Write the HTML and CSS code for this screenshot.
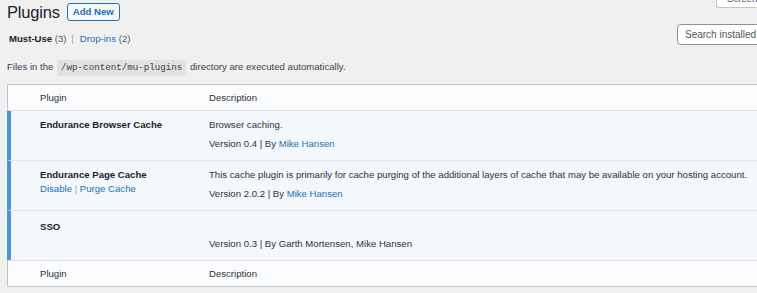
FILE: index.html
```html
<!DOCTYPE html>
<html lang="en">
<head>
    <meta charset="UTF-8">
    <meta name="viewport" content="width=device-width, initial-scale=1.0">
    <title>Plugins</title>
    <link rel="stylesheet" href="styles.css">
</head>
<body>
    <div class="wrap">
        <button class="screen-options">Screen Options &#9662;</button>

        <div class="page-title">
            <h1>Plugins</h1>
            <a class="add-new" href="#">Add New</a>
        </div>

        <div class="tablenav">
            <ul class="subsubsub">
                <li><a class="current" href="#">Must-Use <span class="count">(3)</span></a> <span class="sep">|</span></li>
                <li><a href="#">Drop-ins</a> <span class="count">(2)</span></li>
            </ul>
            <input class="search" type="search" placeholder="Search installed plugins...">
        </div>

        <p class="notice">Files in the <code>/wp-content/mu-plugins</code> directory are executed automatically.</p>

        <table class="plugins">
            <thead>
                <tr>
                    <th class="column-name">Plugin</th>
                    <th class="column-desc">Description</th>
                </tr>
            </thead>
            <tbody>
                <tr class="active">
                    <td class="plugin-title"><strong>Endurance Browser Cache</strong></td>
                    <td class="plugin-desc">
                        <p>Browser caching.</p>
                        <div class="meta">Version 0.4 | By <a href="#">Mike Hansen</a></div>
                    </td>
                </tr>
                <tr class="active">
                    <td class="plugin-title">
                        <strong>Endurance Page Cache</strong>
                        <div class="row-actions"><a href="#">Disable</a> <span class="sep">|</span> <a href="#">Purge Cache</a></div>
                    </td>
                    <td class="plugin-desc">
                        <p>This cache plugin is primarily for cache purging of the additional layers of cache that may be available on your hosting account.</p>
                        <div class="meta">Version 2.0.2 | By <a href="#">Mike Hansen</a></div>
                    </td>
                </tr>
                <tr class="active">
                    <td class="plugin-title sso"><strong>SSO</strong></td>
                    <td class="plugin-desc">
                        <p></p>
                        <div class="meta">Version 0.3 | By Garth Mortensen, Mike Hansen</div>
                    </td>
                </tr>
            </tbody>
            <tfoot>
                <tr>
                    <th class="column-name">Plugin</th>
                    <th class="column-desc">Description</th>
                </tr>
            </tfoot>
        </table>
    </div>
</body>
</html>
```

FILE: styles.css
```css
html, body {
    margin: 0;
    overflow: hidden;
}
body {
    font-family: "Liberation Sans", Arial, sans-serif;
    font-size: 9.6px;
    color: #3c434a;
    background: #f0f0f1;
}
a {
    color: #2271b1;
    text-decoration: none;
}
.wrap {
    position: relative;
    width: 820px;
    padding-left: 7px;
}
.screen-options {
    position: absolute;
    top: -11px;
    left: 716px;
    height: 19px;
    padding: 0 10px;
    font-family: inherit;
    font-size: 9.6px;
    color: #50575e;
    background: #fff;
    border: 1px solid #c3c4c7;
    border-top: none;
    border-radius: 0 0 3px 3px;
}
.page-title {
    display: flex;
    align-items: center;
    gap: 7px;
    height: 24px;
}
h1 {
    margin: 0;
    font-size: 16.5px;
    font-weight: 400;
    line-height: 24px;
    color: #1d2327;
    letter-spacing: -0.2px;
}
.add-new {
    display: block;
    height: 16px;
    line-height: 16px;
    padding: 0 5px;
    font-weight: 700;
    border: 1px solid #2271b1;
    border-radius: 3px;
    background: #f6f7f7;
}
.tablenav {
    display: flex;
    align-items: flex-start;
    height: 21px;
}
.subsubsub {
    display: flex;
    gap: 4px;
    margin: 0;
    padding: 8px 0 0 2px;
    list-style: none;
    line-height: 14px;
    color: #50575e;
}
.subsubsub .current {
    color: #1d2327;
    font-weight: 700;
}
.subsubsub .count {
    color: #50575e;
    font-weight: 400;
}
.sep {
    color: #a7aaad;
    padding: 0 2px;
}
.search {
    margin-left: auto;
    width: 150px;
    height: 21px;
    box-sizing: border-box;
    padding: 0 7px;
    font-family: inherit;
    font-size: 10px;
    color: #2c3338;
    background: #fff;
    border: 1px solid #8c8f94;
    border-radius: 4px;
}
.search::placeholder {
    color: #50575e;
}
.notice {
    margin: 14px 0 0;
    line-height: 16px;
    color: #3c434a;
}
.notice code {
    display: inline-block;
    padding: 0 4px;
    margin: 0 1px;
    font-family: "Liberation Mono", monospace;
    font-size: 9.2px;
    line-height: 16px;
    background: rgba(0,0,0,0.06);
    color: #3c434a;
}
.plugins {
    width: 100%;
    margin-top: 8px;
    table-layout: fixed;
    border-collapse: separate;
    border-spacing: 0;
    border-top: 1px solid #c3c4c7;
    border-bottom: 1px solid #c3c4c7;
    border-right: 1px solid #c3c4c7;
    background: #fafcfe;
}
.plugins th {
    text-align: left;
    font-weight: 400;
    line-height: 25px;
    padding: 0 10px;
    color: #2c3338;
    background: #fafcfe;
}
.plugins thead th {
    border-bottom: 1px solid #dcdcde;
}
.plugins tfoot th {
    border-top: 1px solid #dcdcde;
}
.plugins th.column-name {
    box-sizing: border-box;
    width: 192px;
    padding-left: 32px;
    border-left: 1px solid #c3c4c7;
}
.plugins td {
    vertical-align: top;
    padding: 7px 10px 9px;
    line-height: 14px;
    background: #f4f8fc;
    border-bottom: 1px solid #e3e6e9;
}
.plugins tbody tr:last-child td {
    border-bottom: none;
}
.plugins td.plugin-title {
    padding-left: 29px;
    border-left: 4px solid #4b97d6;
}
.plugins td.sso {
    padding-top: 9px;
}
.plugin-title strong {
    display: block;
    font-weight: 700;
    color: #1d2327;
}
.plugin-desc p {
    margin: 0;
    min-height: 14px;
    color: #2c3338;
    white-space: nowrap;
}
.plugin-desc .meta {
    margin-top: 5px;
    color: #2c3338;
}
.row-actions .sep {
    padding: 0;
}
```
